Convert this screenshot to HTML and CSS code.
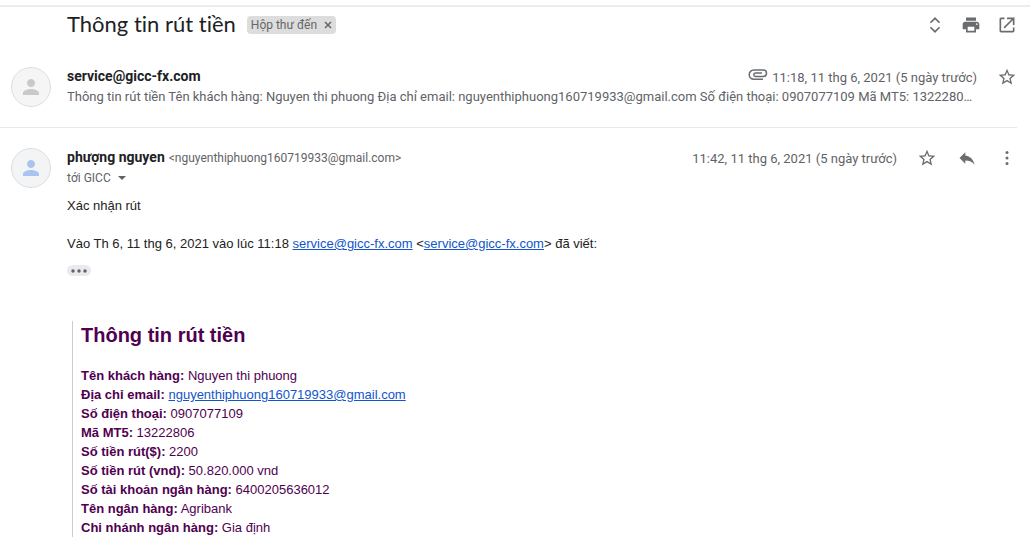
FILE: index.html
```html
<!DOCTYPE html>
<html lang="vi">
<head>
<meta charset="utf-8">
<title>Thông tin rút tiền</title>
<meta name="viewport" content="width=device-width, initial-scale=1">
<link rel="stylesheet" href="styles.css">
</head>
<body>
<main class="thread">
  <header class="thread-header">
    <h1 class="subject">Thông tin rút tiền</h1>
    <span class="label">Hộp thư đến
      <button class="label-remove" type="button" aria-label="Xóa nhãn"><svg class="cross" viewBox="0 0 8 8"><path d="M1 1l6 6M7 1l-6 6"/></svg></button>
    </span>
    <div class="tools">
      <button class="icon-button" type="button" aria-label="Mở rộng tất cả"><svg class="icon" viewBox="0 0 24 24"><path d="M12 5.300L16.800 10l1.400-1.400L12 2.400 5.800 8.600 7.200 10 12 5.300zm0 13.400L7.200 14l-1.400 1.400L12 21.600l6.200-6.200L16.800 14 12 18.700z"/></svg></button>
      <button class="icon-button" type="button" aria-label="In"><svg class="icon" viewBox="0 0 24 24"><path d="M19 8H5c-1.660 0-3 1.340-3 3v6h4v4h12v-4h4v-6c0-1.660-1.340-3-3-3zm-3 11H8v-5h8v5zm3-7c-.55 0-1-.45-1-1s.45-1 1-1 1 .45 1 1-.45 1-1 1zm-1-9H6v4h12V3z"/></svg></button>
      <button class="icon-button" type="button" aria-label="Mở trong cửa sổ mới"><svg class="icon" viewBox="0 0 24 24"><path d="M19 19H5V5h4V3H5c-1.110 0-2 .9-2 2v14c0 1.100.89 2 2 2h14c1.100 0 2-.9 2-2v-4h-2v4zM12 3v2h5.590l-9.830 9.830 1.410 1.410L19 6.410V12h2V3h-9z"/></svg></button>
    </div>
  </header>

  <article class="message message-collapsed">
    <div class="avatar"><svg class="person" viewBox="0 0 24 24"><path d="M12 12c2.210 0 4-1.790 4-4s-1.790-4-4-4-4 1.790-4 4 1.790 4 4 4zm0 2c-2.670 0-8 1.340-8 4v2h16v-2c0-2.660-5.330-4-8-4z"/></svg></div>
    <div class="content">
      <div class="message-head">
        <h2 class="sender">service@gicc-fx.com</h2>
        <div class="meta">
          <svg class="clip" viewBox="0 0 20 12"><path d="M14 4H7.500a1.700 1.700 0 0 0 0 3.400H15.300a3.200 3.200 0 0 0 0-6.400H5.800a4.600 4.600 0 0 0 0 9.200H15"/></svg>
          <time class="date">11:18, 11 thg 6, 2021 (5 ngày trước)</time>
          <button class="icon-button" type="button" aria-label="Gắn dấu sao"><svg class="icon" viewBox="0 0 24 24"><path d="M22 9.240l-7.190-.62L12 2 9.190 8.630 2 9.240l5.460 4.730L5.820 21 12 17.270 18.180 21l-1.630-7.030L22 9.240zM12 15.400l-3.760 2.270 1-4.280-3.320-2.880 4.380-.38L12 6.100l1.710 4.040 4.380.38-3.320 2.880 1 4.280L12 15.400z"/></svg></button>
        </div>
      </div>
      <p class="snippet">Thông tin rút tiền Tên khách hàng: Nguyen thi phuong Địa chỉ email: nguyenthiphuong160719933@gmail.com Số điện thoại: 0907077109 Mã MT5: 1322280…</p>
    </div>
  </article>

  <article class="message">
    <div class="avatar avatar-blue"><svg class="person" viewBox="0 0 24 24"><path d="M12 12c2.210 0 4-1.790 4-4s-1.790-4-4-4-4 1.790-4 4 1.790 4 4 4zm0 2c-2.670 0-8 1.340-8 4v2h16v-2c0-2.660-5.330-4-8-4z"/></svg></div>
    <div class="content">
      <div class="message-head">
        <h2 class="sender">phượng nguyen</h2>
        <span class="address">&lt;nguyenthiphuong160719933@gmail.com&gt;</span>
        <div class="meta">
          <time class="date">11:42, 11 thg 6, 2021 (5 ngày trước)</time>
          <button class="icon-button" type="button" aria-label="Gắn dấu sao"><svg class="icon" viewBox="0 0 24 24"><path d="M22 9.240l-7.190-.62L12 2 9.190 8.630 2 9.240l5.460 4.730L5.820 21 12 17.270 18.180 21l-1.630-7.030L22 9.240zM12 15.400l-3.760 2.270 1-4.280-3.320-2.880 4.380-.38L12 6.100l1.710 4.040 4.380.38-3.320 2.880 1 4.280L12 15.400z"/></svg></button>
          <button class="icon-button" type="button" aria-label="Trả lời"><svg class="icon" viewBox="0 0 24 24"><path d="M10 9V5l-7 7 7 7v-4.100c5 0 8.500 1.600 11 5.100-1-5-4-10-11-11z"/></svg></button>
          <button class="icon-button" type="button" aria-label="Khác"><svg class="icon" viewBox="0 0 24 24"><circle cx="12" cy="5.500" r="1.800"/><circle cx="12" cy="12" r="1.800"/><circle cx="12" cy="18.500" r="1.800"/></svg></button>
        </div>
      </div>
      <button class="recipients" type="button">tới GICC <svg class="caret" viewBox="0 0 8 4"><path d="M0 0h8L4 4z"/></svg></button>
      <div class="body">
        <p class="line">Xác nhận rút</p>
        <p class="line">Vào Th 6, 11 thg 6, 2021 vào lúc 11:18 <a href="mailto:service@gicc-fx.com">service@gicc-fx.com</a> &lt;<a href="mailto:service@gicc-fx.com">service@gicc-fx.com</a>&gt; đã viết:</p>
        <button class="trim" type="button" aria-label="Ẩn nội dung mở rộng"><svg class="dots" viewBox="0 0 16 4"><circle cx="2" cy="2" r="1.700"/><circle cx="8" cy="2" r="1.700"/><circle cx="14" cy="2" r="1.700"/></svg></button>
        <blockquote class="quote">
          <h3 class="quote-title">Thông tin rút tiền</h3>
          <p><b>Tên khách hàng:</b> Nguyen thi phuong</p>
          <p><b>Địa chỉ email:</b> <a href="mailto:nguyenthiphuong160719933@gmail.com">nguyenthiphuong160719933@gmail.com</a></p>
          <p><b>Số điện thoại:</b> 0907077109</p>
          <p><b>Mã MT5:</b> 13222806</p>
          <p><b>Số tiền rút($):</b> 2200</p>
          <p><b>Số tiền rút (vnd):</b> 50.820.000 vnd</p>
          <p><b>Số tài khoản ngân hàng:</b> 6400205636012</p>
          <p><b>Tên ngân hàng:</b> Agribank</p>
          <p><b>Chi nhánh ngân hàng:</b> Gia định</p>
        </blockquote>
      </div>
    </div>
  </article>
</main>
</body>
</html>
```
FILE: styles.css
```css
* {
  box-sizing: border-box;
}

body {
  margin: 0;
  padding-top: 5px;
  background: #fff;
  color: #222;
  font-family: Roboto, "Liberation Sans", sans-serif;
  font-size: 13px;
}

h1, h2, h3, p, blockquote {
  margin: 0;
}

button {
  padding: 0;
  border: 0;
  background: none;
  color: inherit;
  font: inherit;
  cursor: pointer;
}

.thread {
  border-top: 2px solid #ececec;
  margin-right: 4px;
}

.thread-header {
  display: flex;
  align-items: center;
  height: 36px;
  padding: 0 13px 0 67px;
}

.subject {
  color: #202124;
  font-family: Lato, "Open Sans", sans-serif;
  font-size: 22px;
  font-variant-ligatures: none;
  font-weight: 400;
  line-height: 28px;
  padding-bottom: 2px;
}

.label {
  display: flex;
  align-items: center;
  gap: 7px;
  height: 18px;
  margin-left: 11px;
  padding: 0 4px;
  border-radius: 4px;
  background: #ddd;
  color: #666;
  font-size: 12px;
}

.label-remove {
  display: flex;
}

.cross {
  width: 8px;
  height: 8px;
  fill: none;
  stroke: #666;
  stroke-width: 1.5;
}

.tools {
  display: flex;
  gap: 16px;
  margin-left: auto;
}

.icon-button {
  display: flex;
}

.icon {
  width: 20px;
  height: 20px;
  fill: #6a6d70;
}

.message {
  display: flex;
  gap: 16px;
  padding: 20px 13px 0 11px;
}

.message-collapsed {
  padding-top: 24px;
  padding-bottom: 20px;
  border-bottom: 1px solid #e6eaea;
  margin-right: 13px;
  padding-right: 0;
}

.avatar {
  display: flex;
  flex: none;
  align-items: center;
  justify-content: center;
  width: 40px;
  height: 40px;
  border: 1px solid #dedede;
  border-radius: 50%;
  background: #f5f5f5;
}

.avatar-blue {
  background: #f3f4f5;
}

.person {
  width: 24px;
  height: 24px;
  fill: #c9c9c9;
}

.avatar-blue .person {
  fill: #a9c4f0;
}

.content {
  flex: 1;
  min-width: 0;
}

.message-head {
  display: flex;
  align-items: center;
  height: 20px;
}

.sender {
  padding-bottom: 2px;
  color: #202124;
  font-size: 14px;
  font-weight: 700;
}

.address {
  margin-left: 4px;
  color: #5f6368;
  font-size: 12px;
}

.meta {
  display: flex;
  align-items: center;
  gap: 20px;
  margin-left: auto;
  color: #5f6368;
  font-size: 13px;
}

.clip {
  width: 20px;
  height: 12px;
  margin: 0 -16px 4px 0;
  fill: none;
  stroke: #6a6d70;
  stroke-width: 1.5;
}

.snippet {
  overflow: hidden;
  color: #5f6368;
  font-size: 13px;
  line-height: 20px;
  text-overflow: ellipsis;
  white-space: nowrap;
}

.recipients {
  display: flex;
  align-items: center;
  gap: 7px;
  height: 20px;
  color: #5f6368;
  font-size: 12px;
}

.caret {
  width: 8px;
  height: 4px;
  fill: #5f6368;
}

.body {
  padding-top: 8px;
  font-family: "Liberation Sans", Arial, sans-serif;
  line-height: 19px;
}

.line {
  margin-bottom: 19px;
}

.body a {
  color: #15c;
}

.trim {
  display: flex;
  align-items: center;
  justify-content: center;
  width: 24px;
  height: 11px;
  margin-top: -7px;
  border-radius: 6px;
  background: #e8eaed;
}

.dots {
  width: 16px;
  height: 4px;
  fill: #5f6368;
}

.quote {
  margin: 45px 0 0 5px;
  padding-left: 8px;
  border-left: 1px solid #ccc;
  color: #500050;
}

.quote-title {
  padding-bottom: 17px;
  font-size: 20px;
  line-height: 28px;
}
```
